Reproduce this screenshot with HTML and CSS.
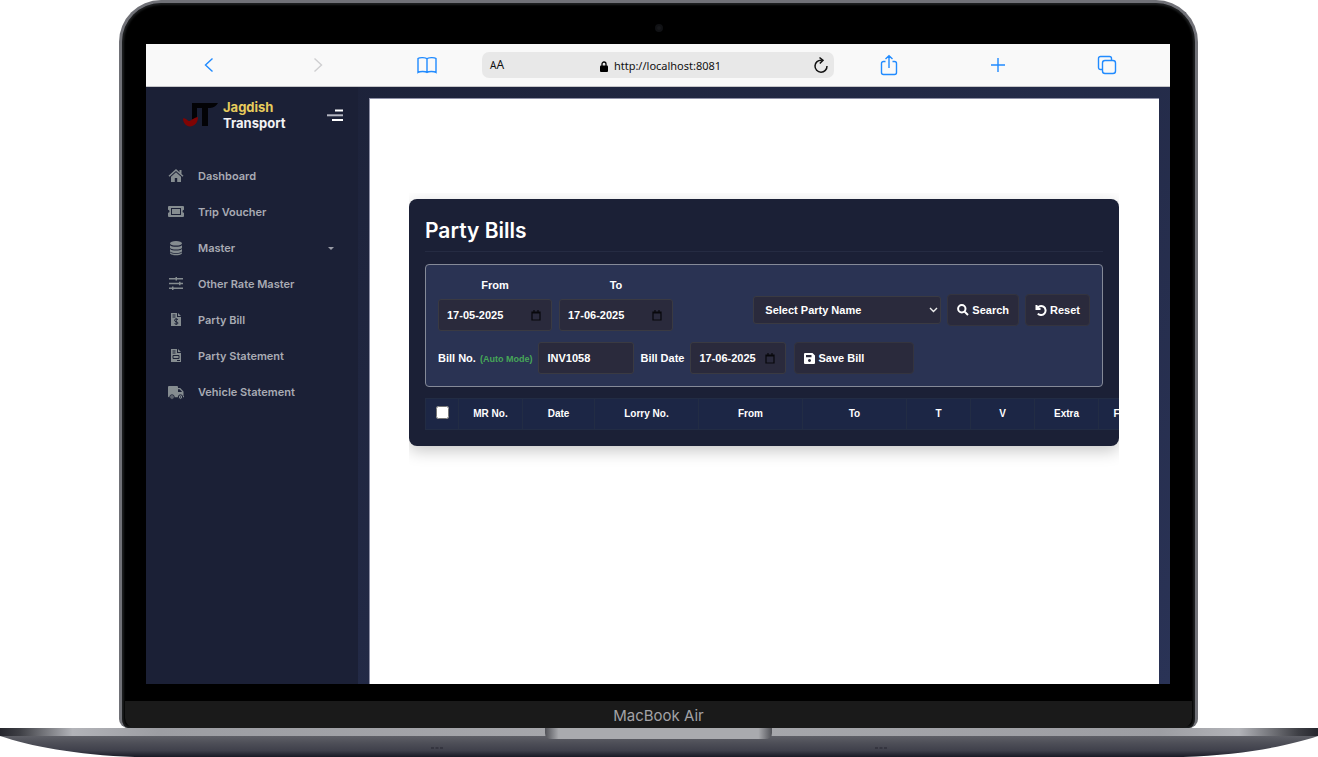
FILE: index.html
```html
<!DOCTYPE html>
<html lang="en">
<head>
<meta charset="utf-8">
<title>Party Bills</title>
<link rel="stylesheet" href="styles.css">
</head>
<body>
<div class="lid">
  <span class="camera"></span>
  <div class="screen">
    <header class="browser">
      <div class="browser-group browser-left">
        <button class="tool" aria-label="Back"><svg width="20" height="20" viewBox="0 0 20 20"><path d="M13.5 3.5 6.500 10l7 6.500"/></svg></button>
        <button class="tool tool-off" aria-label="Forward"><svg width="20" height="20" viewBox="0 0 20 20"><path d="M6.500 3.500 13.500 10l-7 6.500"/></svg></button>
        <button class="tool" aria-label="Bookmarks"><svg width="22" height="20" viewBox="0 0 22 20"><path d="M11 4v13M11 4C10 2.300 3.500 2.200 2 3.600v13.800c2-1.300 7.500-1.200 9 0 1.500-1.200 7-1.300 9 0V3.600C18.500 2.200 12 2.300 11 4z"/></svg></button>
      </div>
      <div class="address">
        <span class="text-size"><small>A</small>A</span>
        <span class="url"><svg width="8" height="11" viewBox="0 0 8 11"><path d="M2 5V3a2 2 0 0 1 4 0v2" fill="none" stroke="#000" stroke-width="1.300"/><rect y="4.500" width="8" height="6.500" rx="1"/></svg>http://localhost:8081</span>
        <button class="reload" aria-label="Reload"><svg width="16" height="18" viewBox="0 0 16 18"><path d="M8.500 4.200a6 6 0 1 0 5.500 5.800M6.500 1.500l3.500 2.800L6.800 7.500"/></svg></button>
      </div>
      <div class="browser-group browser-right">
        <button class="tool" aria-label="Share"><svg width="18" height="22" viewBox="0 0 18 22"><path d="M5.500 7.500H3.500a2 2 0 0 0-2 2v9a2 2 0 0 0 2 2h11a2 2 0 0 0 2-2v-9a2 2 0 0 0-2-2h-2M9 14V2M5.500 5 9 1.700 12.500 5"/></svg></button>
        <button class="tool" aria-label="New tab"><svg width="18" height="18" viewBox="0 0 18 18"><path d="M9 2v14M2 9h14"/></svg></button>
        <button class="tool" aria-label="Tabs"><svg width="20" height="20" viewBox="0 0 20 20"><rect x="5.500" y="5.500" width="13" height="13" rx="2.500"/><path d="M5.500 14.500H3.500a2 2 0 0 1-2-2v-9a2 2 0 0 1 2-2h9a2 2 0 0 1 2 2v2"/></svg></button>
      </div>
    </header>
    <div class="app">
      <aside class="sidebar">
        <div class="brand">
          <svg class="logo" width="35" height="26" viewBox="0 0 35 26"><path d="M9 1h26c-2 3-4 4.500-8 5h-2v18h-6V6h-4v9l-6 3z" fill="#030306"/><path d="M14 6h1.500v11H14z" fill="#1b2036"/><path d="M0 16.500c3-1 4 2.500 6 2.500s3-2.500 9-4c0 6-4 9.500-8 9.500s-7-4-7-8z" fill="#800404"/></svg>
          <span class="brand-name"><span class="gold">Jagdish</span><br>Transport</span>
          <button class="menu-toggle" aria-label="Toggle menu"><svg width="16" height="13" viewBox="0 0 16 13"><path d="M8 0.500h8v2H8zM5 10h11v2H5z" fill="#fff"/><path d="M0 5.300h16v2H0z" fill="#b5b7c2"/></svg></button>
        </div>
        <nav class="nav">
          <a href="#"><svg viewBox="0 0 16 16"><path d="M8 1 0.500 7.700l1 1L8 3l6.500 5.700 1-1L13.500 6V2h-2v2.200zM8 4.300 3 8.700V14h3.800v-4h2.400v4H13V8.700z"/></svg>Dashboard</a>
          <a href="#"><svg viewBox="0 0 16 16"><path fill-rule="evenodd" d="M1 2h14q1 0 1 1v2.800a1.500 1.500 0 0 0 0 3V12q0 1-1 1H1q-1 0-1-1V8.800a1.500 1.500 0 0 0 0-3V3q0-1 1-1zm2 2v7h10V4zm1 1h8v5H4z"/></svg>Trip Voucher</a>
          <a href="#"><svg viewBox="0 0 16 16"><ellipse cx="8" cy="3.300" rx="6" ry="2.300"/><path d="M2 5.300c2 2 10 2 12 0v2.200c0 2.700-12 2.700-12 0zM2 9c2 2 10 2 12 0v2c0 2.700-12 2.700-12 0zM2 12.300c2 2 10 2 12 0v.700c0 3-12 3-12 0z"/></svg>Master<span class="caret"></span></a>
          <a href="#"><svg viewBox="0 0 16 16"><path d="M1 2h14v1.500H1zM1 6.800h14v1.400H1zM1 11.500h14V13H1zM7.500 1h1.500v3.500H7.500zM11 5.700h1.500v3.600H11zM4 10.400h1.500V14H4z"/></svg>Other Rate Master</a>
          <a href="#"><svg viewBox="0 0 16 16"><path d="M3 1h6v4h4v9H3zM10 1l3 3h-3z"/><path d="M4.500 3h3M4.500 5h3" stroke="#1b2036"/><path d="M10 7.500C8 6.500 6.500 7 6.500 8.500c0 1.500 3.500 1 3.500 2.500 0 1.300-2 1.600-3.500.6M8.200 6.300v6.500" fill="none" stroke="#1b2036"/></svg>Party Bill</a>
          <a href="#"><svg viewBox="0 0 16 16"><path d="M3 1h6v4h4v9H3zM10 1l3 3h-3z"/><path d="M4.500 3h3M4.500 5h3M5 7.500h6v3H5zM9 12.500h3" fill="none" stroke="#1b2036"/></svg>Party Statement</a>
          <a href="#"><svg viewBox="0 0 16 16"><path fill-rule="evenodd" d="M1 2h8q1 0 1 1v1h2.200L15.500 7.500V12h.5v1.200H1q-1 0-1-1V3q0-1 1-1zm9 3.300v2.700h4.200L11.600 5.300z"/><circle cx="4" cy="13" r="2.200" stroke="#1b2036"/><circle cx="12.500" cy="13" r="2.200" stroke="#1b2036"/><circle cx="4" cy="13" r=".7" fill="#1b2036"/><circle cx="12.500" cy="13" r=".7" fill="#1b2036"/></svg>Vehicle Statement</a>
        </nav>
      </aside>
      <main class="main">
        <div class="panel">
          <section class="card">
            <h1>Party Bills</h1>
            <form class="filters">
              <div class="row">
                <div class="dated"><label for="from">From</label><span class="date"><input id="from" type="text" value="17-05-2025"><svg class="cal" width="10" height="11" viewBox="0 0 10 11"><path d="M1 2h8v8H1zM1 3h8M3 0v2M7 0v2"/></svg></span></div>
                <div class="dated"><label for="to">To</label><span class="date"><input id="to" type="text" value="17-06-2025"><svg class="cal" width="10" height="11" viewBox="0 0 10 11"><path d="M1 2h8v8H1zM1 3h8M3 0v2M7 0v2"/></svg></span></div>
                <div class="search">
                  <span class="party"><select aria-label="Party name"><option>Select Party Name</option></select><svg width="9" height="6" viewBox="0 0 9 6"><path d="M1 1l3.500 3.500L8 1"/></svg></span>
                  <button type="button" class="btn"><svg width="12" height="12" viewBox="0 0 12 12"><circle cx="4.800" cy="4.800" r="3.700"/><path d="M7.600 7.600 11 11"/></svg>Search</button>
                  <button type="button" class="btn"><svg width="12" height="12" viewBox="0 0 12 12"><path d="M1.500 1v4h4M2 4.600a4.500 4.500 0 1 1 .8 5"/></svg>Reset</button>
                </div>
              </div>
              <div class="row bill">
                <label for="no">Bill No. <span class="auto">(Auto Mode)</span></label>
                <input id="no" class="number" type="text" value="INV1058">
                <label for="bd" class="bill-date">Bill Date</label>
                <span class="date date-short"><input id="bd" type="text" value="17-06-2025"><svg class="cal" width="10" height="11" viewBox="0 0 10 11"><path d="M1 2h8v8H1zM1 3h8M3 0v2M7 0v2"/></svg></span>
                <button type="button" class="btn save"><svg class="solid" width="11" height="11" viewBox="0 0 11 11"><path fill-rule="evenodd" d="M1 0h7.500L11 2.500V10q0 1-1 1H1q-1 0-1-1V1q0-1 1-1zm1 2v2.300h5.500V2zm3.500 4a1.500 1.500 0 1 0 .01 0z"/></svg>Save Bill</button>
              </div>
            </form>
            <div class="table-clip">
              <table>
                <colgroup><col class="c-check"><col class="c-s"><col class="c-m"><col class="c-l"><col class="c-l"><col class="c-l"><col class="c-s"><col class="c-s"><col class="c-s"><col class="c-s"></colgroup>
                <thead><tr><th><input type="checkbox" aria-label="Select all"></th><th>MR No.</th><th>Date</th><th>Lorry No.</th><th>From</th><th>To</th><th>T</th><th>V</th><th>Extra</th><th>Freight</th></tr></thead>
              </table>
            </div>
          </section>
        </div>
      </main>
    </div>
  </div>
  <div class="chin">MacBook Air</div>
</div>
<svg class="base" viewBox="0 0 1318 29" preserveAspectRatio="none">
  <defs>
    <linearGradient id="top"><stop offset="0" stop-color="#25262d"/><stop offset=".015" stop-color="#3e3f45"/><stop offset=".055" stop-color="#b2b3b8"/><stop offset=".12" stop-color="#9d9ea3"/><stop offset=".5" stop-color="#a8a9ad"/><stop offset=".88" stop-color="#9d9ea3"/><stop offset=".94" stop-color="#b2b3b8"/><stop offset=".985" stop-color="#3e3f45"/><stop offset="1" stop-color="#25262d"/></linearGradient>
    <linearGradient id="body" x2="0" y2="1"><stop offset="0" stop-color="#5f6067"/><stop offset=".35" stop-color="#4d4e57"/><stop offset=".7" stop-color="#3f404b"/><stop offset="1" stop-color="#191a25"/></linearGradient>
    <linearGradient id="notch"><stop offset="0" stop-color="#505157"/><stop offset=".06" stop-color="#a9aaae"/><stop offset=".94" stop-color="#a9aaae"/><stop offset="1" stop-color="#505157"/></linearGradient>
  </defs>
  <path d="M0 8C30 18 75 27 135 29H1183C1243 27 1288 18 1318 8z" fill="url(#body)"/>
  <path d="M0 0H1318V8H0z" fill="url(#top)"/>
  <path d="M545 0H772V5q0 6-7 6H552q-7 0-7-6z" fill="url(#notch)"/>
  <path d="M431 20h12M875 20h12" stroke="#30313b" stroke-width="1.500" stroke-dasharray="3 1.500"/>
</svg>
</body>
</html>
```
FILE: styles.css
```css
* { box-sizing: border-box; }
body {
  margin: 0;
  min-height: 100vh;
  display: flex;
  flex-direction: column;
  background: #fff;
  font: 600 11px/16px "Liberation Sans", Arial, sans-serif;
}
button, input, select { font: inherit; color: inherit; margin: 0; }
button { background: none; border: 0; padding: 0; }
svg { flex: none; display: block; }

.lid {
  flex: 1;
  display: flex;
  flex-direction: column;
  position: relative;
  margin: 0 120px 0 119px;
  padding: 41px 25px 0 24px;
  border: 3px solid #707177;
  border-bottom: 0;
  border-radius: 42px 42px 9px 9px;
  background: #000;
  box-shadow: inset 0 0 2px 2px #1d1f20;
}
.camera {
  position: absolute;
  top: 21px;
  left: calc(50% - 4px);
  width: 8px;
  height: 8px;
  border-radius: 50%;
  background: #17181b;
  border: 2px solid #101114;
}
.screen { flex: 1; display: flex; flex-direction: column; background: #fff; }
.chin {
  margin: 17px -22px 0 -21px;
  height: 27px;
  border-radius: 0 0 10px 10px;
  background: #1a1a1a;
  color: #a2a2a6;
  text-align: center;
  font: 400 15px/29px Inter, sans-serif;
}
.base { width: 100%; height: 29px; }

.browser {
  display: grid;
  grid-template-columns: 21fr 22fr 21fr;
  align-items: center;
  height: 43px;
  background: #f9f9f9;
  border-bottom: 1px solid #c6c6c9;
}
.browser-group { display: grid; grid-template-columns: repeat(3, 1fr); }
.browser-left { padding-left: 8px; }
.browser-right { padding-right: 8px; }
.tool { display: flex; justify-content: center; align-items: center; }
.tool svg { fill: none; stroke: #218bff; stroke-width: 1.4; }
.tool-off svg { stroke: #cfcfd1; }
.address {
  display: flex;
  align-items: center;
  height: 26px;
  padding: 0 5px 0 8px;
  border-radius: 7px;
  background: #e8e8e8;
  color: #111;
  font: 400 11px/16px "Noto Sans", sans-serif;
}
.text-size { font-size: 12px; }
.text-size small { font-size: 10px; }
.url { flex: 1; display: flex; justify-content: center; align-items: center; gap: 6px; padding: 2px 0 0 4px; }
.reload svg { fill: none; stroke: #111; stroke-width: 1.5; }

.app { flex: 1; display: flex; background: linear-gradient(135deg, #1b2036, #2a3356); }
.sidebar { width: 212px; background: #1b2036; color: #a9abb4; }
.brand { display: flex; align-items: center; padding: 12px 15px 0 37px; }
.brand-name {
  flex: 1;
  margin-left: 5px;
  color: #f2f2f4;
  font: 700 13px/16px Inter, sans-serif;
}
.gold { color: #e8cc5c; }
.nav { display: flex; flex-direction: column; padding: 27px 24px 0 22px; }
.nav a {
  display: flex;
  align-items: center;
  gap: 14px;
  height: 36px;
  color: inherit;
  text-decoration: none;
  font: 600 11px/16px Inter, sans-serif;
}
.nav svg { width: 16px; height: 16px; fill: #858c90; }
.caret { margin-left: auto; border: 3px solid transparent; border-top-color: #9a9ca6; border-bottom: 0; }

.main { flex: 1; min-width: 0; display: flex; padding: 11px 11px 0; }
.panel {
  flex: 1;
  min-width: 0;
  padding: 100px 40px 0 39px;
  background: #fff;
  border: solid #8f91a7;
  border-width: 1px 0 0 1px;
}
.card {
  padding: 16px;
  border-radius: 8px;
  background: #1b2036;
  color: #fff;
  box-shadow: 0 5px 16px rgba(0, 0, 0, .22);
  clip-path: inset(-6px 0 -24px);
}
h1 {
  margin: 0 0 12px;
  padding-bottom: 4px;
  border-bottom: 1px solid #252b42;
  font: 600 21px/32px Inter, sans-serif;
}
.filters {
  padding: 10px 12px 12px;
  border: 1px solid #858a98;
  border-radius: 4px;
  background: #2a3353;
}
.row { display: flex; gap: 7px; }
.dated { text-align: center; }
.dated label { display: block; padding: 2px 0 6px; }
.date { display: flex; align-items: center; position: relative; width: 114px; height: 32px; }
.date-short { width: 96px; }
input[type="text"] {
  width: 100%;
  height: 32px;
  padding: 0 8px;
  border: 1px solid #3a3a42;
  border-radius: 3px;
  background: #2a2a3c;
}
.cal { position: absolute; right: 11px; fill: none; stroke: #08080c; stroke-width: 1.2; }
.search { display: flex; align-items: center; gap: 6px; margin-left: auto; padding-top: 14px; }
.party { display: grid; align-items: center; width: 188px; }
.party > * { grid-area: 1 / 1; }
.party svg { justify-self: end; margin-right: 3px; fill: none; stroke: #eee; stroke-width: 1.4; pointer-events: none; }
select {
  appearance: none;
  width: 100%;
  height: 28px;
  padding: 0 11px;
  border: 1px solid #3a3a42;
  border-radius: 3px;
  background: #2a2a3c;
}
.btn {
  display: flex;
  align-items: center;
  gap: 3px;
  height: 32px;
  padding: 0 9px;
  border: 1px solid #34343f;
  border-radius: 4px;
  background: #2a2a3c;
}
.btn svg { fill: none; stroke: #fff; stroke-width: 2; }
.btn .solid { fill: #fff; stroke: none; }
.save { width: 120px; margin-left: 2px; }
.bill { align-items: center; gap: 6px; margin-top: 11px; }
.auto { margin-left: 1px; color: #46a758; font-size: 9px; }
.number[type="text"] { width: 96px; }
.table-clip { margin: 11px -16px 0 0; overflow: hidden; }
table { table-layout: fixed; width: 737px; border-collapse: collapse; background: #1c2645; font-size: 10px; line-height: 12px; }
.c-check { width: 33px; }
.c-s { width: 64px; }
.c-m { width: 72px; }
.c-l { width: 104px; }
th { height: 31px; padding: 0; border: 1px solid #222c44; text-align: center; }
th input { display: block; width: 13px; height: 13px; margin: 0 auto 4px; }
```
